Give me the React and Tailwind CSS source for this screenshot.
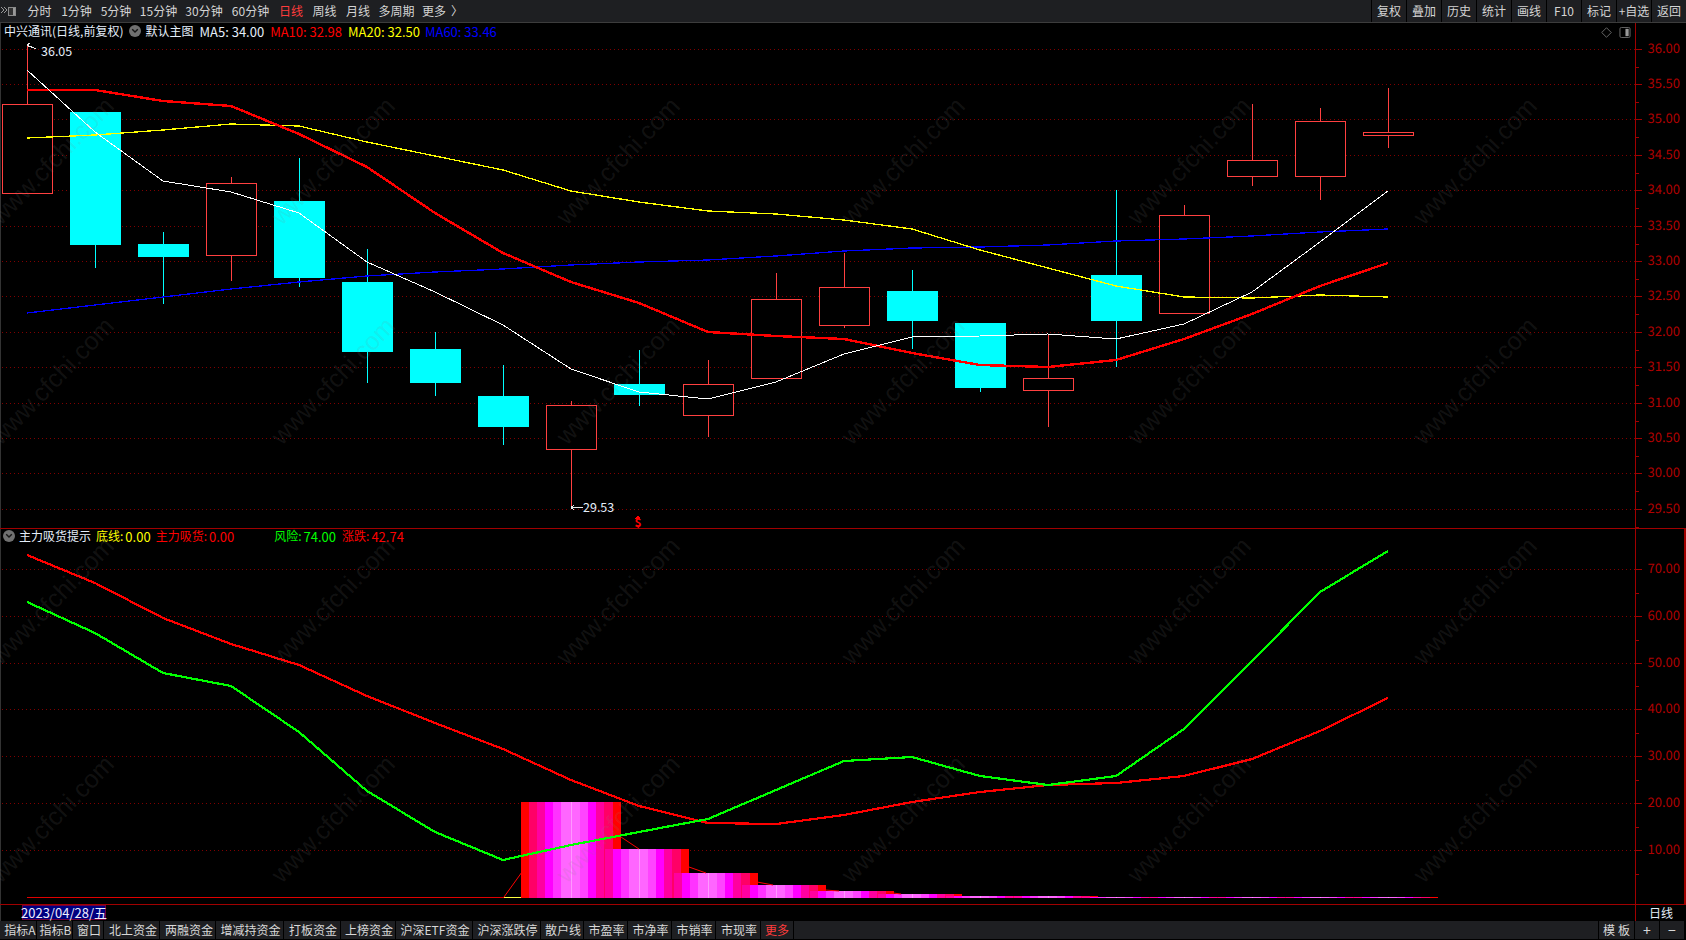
import React from "react";

const cx = (i) => Math.round(27 + 68.05 * i);
const Y = (v) => Math.round(30 + v / 3);
const LY = (v) => Math.round(530 + v / 3);

// [type, high, top, bottom, low] in zoom-image rows
const CANDLES = [
  ["r", 45, 223, 488, 488],
  ["c", 246, 246, 644, 714],
  ["c", 606, 642, 680, 822],
  ["r", 441, 460, 674, 752],
  ["c", 384, 513, 744, 771],
  ["c", 657, 756, 966, 1058],
  ["c", 906, 957, 1058, 1098],
  ["c", 1005, 1098, 1190, 1245],
  ["r", 1113, 1126, 1258, 1432],
  ["c", 960, 1062, 1094, 1128],
  ["r", 990, 1063, 1156, 1220],
  ["r", 729, 808, 1045, 1045],
  ["r", 669, 772, 886, 893],
  ["c", 720, 783, 873, 957],
  ["c", 879, 879, 1074, 1086],
  ["r", 914, 1045, 1079, 1190],
  ["c", 480, 735, 873, 1010],
  ["r", 526, 556, 850, 850],
  ["r", 222, 391, 439, 467],
  ["r", 234, 274, 439, 510],
  ["r", 174, 307, 314, 353],
];

const MA5 = [120, 305, 453, 487, 550, 697, 785, 885, 1018, 1086, 1108, 1056, 972, 921, 918, 913, 928, 882, 787, 635, 482];
const MA10 = [180, 180, 212, 228, 312, 410, 548, 670, 755, 820, 905, 918, 927, 970, 1004, 1011, 991, 927, 852, 768, 698];
const MA20 = [325, 316, 300, 281, 287, 337, 378, 420, 482, 515, 542, 551, 570, 597, 660, 713, 768, 800, 804, 796, 802];
const MA60 = [850, 826, 802, 778, 755, 738, 727, 716, 705, 697, 691, 679, 662, 653, 650, 644, 634, 627, 618, 607, 598];
const RISK = [217, 310, 428, 468, 606, 784, 905, 990, 945, 905, 866, 780, 692, 680, 737, 765, 737, 598, 393, 187, 62];
const CHG = [74, 158, 265, 342, 405, 498, 578, 656, 750, 827, 878, 882, 856, 817, 787, 765, 758, 737, 688, 604, 503];

const PRICE_ROWS = [
  [49, "36.00"], [84, "35.50"], [119, "35.00"], [155, "34.50"], [190, "34.00"], [226, "33.50"], [261, "33.00"],
  [296, "32.50"], [332, "32.00"], [367, "31.50"], [403, "31.00"], [438, "30.50"], [473, "30.00"], [509, "29.50"],
];
const LOWER_ROWS = [
  [569, "70.00"], [616, "60.00"], [663, "50.00"], [709, "40.00"], [756, "30.00"], [803, "20.00"], [850, "10.00"],
];

const STRIPES = [
  [-50, -42, "#ff0000"], [-42, -34, "#ff0066"], [-34, -26, "#ff00a0"], [-26, -18, "#ff00ff"], [-18, -10, "#ff33ff"],
  [-10, 9, "#ff66ff"], [9, 17, "#ff44ff"], [17, 25, "#ff00ff"], [25, 33, "#ff00a0"], [33, 42, "#ff0066"], [42, 50, "#ff0000"],
];
const BARS = [
  [8, 802], [9, 849], [10, 873], [11, 885], [12, 891], [13, 894], [14, 896], [15, 896], [16, 897], [17, 897], [18, 897], [19, 897], [20, 897],
];
const CONNECT = [
  [504, 897, 522, 872], [621, 837, 639, 849], [689, 867, 706, 873], [757, 882, 773, 885], [825, 890, 839, 891], [893, 893, 901, 894],
];

const pts = (arr, fy) => arr.map((v, i) => `${cx(i)},${fy(v)}`).join(" ");

function Grid({ rows }) {
  return rows.map(([y]) => (
    <line key={y} x1="2" x2="1635" y1={y + 0.5} y2={y + 0.5} stroke="#800000" strokeDasharray="1 3" />
  ));
}

function Axis({ rows, top, height, extra = "" }) {
  const ticks = [];
  rows.forEach(([y], i) => {
    ticks.push(<line key={y} x1="0" x2="6" y1={y + 0.5} y2={y + 0.5} stroke="#a00000" />);
    const next = rows[i + 1];
    const my = next ? Math.round((y + next[0]) / 2) : y + Math.round((y - rows[i - 1][0]) / 2);
    ticks.push(<line key={`m${y}`} x1="0" x2="3" y1={my + 0.5} y2={my + 0.5} stroke="#a00000" />);
  });
  return (
    <div className={`w-[51px] shrink-0 border-l border-[#a00000] ${extra}`}>
      <svg width="48" height={height} viewBox={`0 ${top} 48 ${height}`} className="block" shapeRendering="crispEdges">
        {ticks}
        {rows.map(([y, t]) => (
          <text key={t} x="44" y={y + 4} textAnchor="end" fontSize="13" fill="#b00000" textRendering="geometricPrecision">{t}</text>
        ))}
      </svg>
    </div>
  );
}

function MainChart() {
  return (
    <svg width="1635" height="505" viewBox="0 23 1635 505" className="block shrink-0">
      <g shapeRendering="crispEdges">
        <Grid rows={PRICE_ROWS} />
        {CANDLES.map(([t, h, a, b, l], i) => {
          const x = cx(i) + 0.5;
          const col = t === "r" ? "#ff4040" : "#00ffff";
          const top = Y(a), bot = Y(b);
          return (
            <g key={i}>
              <line x1={x} x2={x} y1={Y(h)} y2={top} stroke={col} />
              <line x1={x} x2={x} y1={bot} y2={Y(l)} stroke={col} />
              {t === "r" ? (
                <rect x={x - 25} y={top + 0.5} width="50" height={Math.max(bot - top, 2)} fill="#000" stroke={col} />
              ) : (
                <rect x={x - 25.5} y={top} width="51" height={bot - top} fill={col} />
              )}
            </g>
          );
        })}
        <polyline points={pts(MA60, Y)} fill="none" stroke="#0000ff" strokeWidth="1.3" />
        <polyline points={pts(MA20, Y)} fill="none" stroke="#ffff00" strokeWidth="1.3" />
        <polyline points={pts(MA10, Y)} fill="none" stroke="#ff0000" strokeWidth="2.4" />
        <polyline points={pts(MA5, Y)} fill="none" stroke="#ffffff" strokeWidth="1" />
        <line x1="27" x2="36" y1="45" y2="49" stroke="#e8e8e8" />
        <line x1="27" x2="30" y1="45" y2="43" stroke="#e8e8e8" />
        <line x1="27" x2="30" y1="45" y2="47" stroke="#e8e8e8" />
        <line x1="571" x2="583" y1="507.5" y2="507.5" stroke="#e8e8e8" />
        <line x1="571" x2="574" y1="507.5" y2="505" stroke="#e8e8e8" />
        <line x1="571" x2="574" y1="507.5" y2="510" stroke="#e8e8e8" />
        <polygon points="638,515.5 635.5,518.5 640.5,518.5" fill="#ff0000" />
      </g>
      <text x="41" y="56" fontSize="12.5" fill="#e4eefa">36.05</text>
      <text x="583" y="512" fontSize="12.5" fill="#e4eefa">29.53</text>
      <text x="638" y="526.5" fontSize="12" fontWeight="700" textAnchor="middle" fill="#ff0000">$</text>
    </svg>
  );
}

function LowerChart() {
  return (
    <svg width="1635" height="375" viewBox="0 529 1635 375" className="block shrink-0">
      <g shapeRendering="crispEdges">
        <Grid rows={LOWER_ROWS} />
        <rect x="27" y="897" width="477" height="1" fill="#e00000" />
        <rect x="504" y="897" width="18" height="1" fill="#ffff40" />
        <rect x="1430" y="897" width="8" height="1" fill="#d00030" />
        {BARS.map(([i, top], n) => {
          const c = cx(i);
          return (
            <g key={i}>
              {STRIPES.filter(([a]) => n === 0 || a >= -34).map(([a, b, col]) => (
                <rect key={a} x={c + a} y={top} width={b - a} height={898 - top} fill={col} />
              ))}
              <rect x={c} y={top} width="1" height={898 - top} fill="#ff99ff" />
            </g>
          );
        })}
      </g>
      {CONNECT.map(([a, b, c, d]) => (
        <line key={a} x1={a} y1={b} x2={c} y2={d} stroke="#ff0000" strokeWidth="1" />
      ))}
      <g shapeRendering="crispEdges">
        <polyline points={pts(CHG, LY)} fill="none" stroke="#ff0000" strokeWidth="2.2" />
        <polyline points={pts(RISK, LY)} fill="none" stroke="#00ff00" strokeWidth="2.2" />
      </g>
    </svg>
  );
}

function Marks() {
  const rows = [138, 358, 578, 796];
  const cols = [52, 333, 618, 903, 1189, 1475];
  return (
    <div className="absolute inset-0 overflow-hidden pointer-events-none">
      {rows.flatMap((r) =>
        cols.map((c) => (
          <span
            key={`${r}-${c}`}
            className="absolute -translate-x-1/2 -translate-y-1/2 -rotate-[46deg] whitespace-nowrap text-[25px] leading-none text-[rgba(128,128,128,0.14)] font-['Liberation_Sans',sans-serif]"
            style={{ left: c, top: r }}
          >
            www.cfchi.com
          </span>
        ))
      )}
    </div>
  );
}

function Chevron() {
  return (
    <span className="w-[12px] h-[12px] rounded-full bg-[#707070] flex items-center justify-center shrink-0">
      <svg width="8" height="6" viewBox="0 0 8 6"><path d="M1.2 1.2L4 4l2.8-2.8" fill="none" stroke="#151515" strokeWidth="1.4" /></svg>
    </span>
  );
}

const LEFT = [["分时", 35], ["1分钟", 39], ["5分钟", 40], ["15分钟", 45], ["30分钟", 46], ["60分钟", 47], ["日线", 34, 1], ["周线", 33], ["月线", 34], ["多周期", 43]];
const RIGHT = ["复权", "叠加", "历史", "统计", "画线", "F10", "标记", "+自选", "返回"];
const TABS = [["指标A", 35], ["指标B", 36], ["窗口", 31], ["北上资金", 56, 1], ["两融资金", 56, 1], ["增减持资金", 68], ["打板资金", 57], ["上榜资金", 55], ["沪深ETF资金", 77], ["沪深涨跌停", 68], ["散户线", 43], ["市盈率", 44], ["市净率", 44], ["市销率", 44], ["市现率", 45]];

function TopBar() {
  return (
    <div className="h-[23px] flex bg-[#1e1f22] border-b border-[#3c3c3c] text-[12px] text-[#d4d4d4]">
      <div className="w-[22px] flex items-center shrink-0">
        <svg width="18" height="14" viewBox="0 0 18 14">
          <path d="M1 3l3 3-3 3M4 3l3 3-3 3" fill="none" stroke="#9a9a9a" strokeWidth="1" />
          <rect x="8.5" y="3.5" width="7" height="8" fill="#333" stroke="#8a8a8a" />
          <rect x="13" y="4" width="2" height="7" fill="#999" />
        </svg>
      </div>
      {LEFT.map(([t, w, on]) => (
        <div key={t} className={`flex items-center justify-center shrink-0 ${on ? "text-[#ff3c3c]" : ""}`} style={{ width: w }}>{t}</div>
      ))}
      <div className="flex items-center pl-[4px]">更多<span className="ml-[5px]">〉</span></div>
      <div className="flex-1" />
      {RIGHT.map((t) => (
        <div key={t} className="w-[35px] border-l border-black flex items-center justify-center shrink-0 whitespace-nowrap">{t}</div>
      ))}
    </div>
  );
}

function BottomBar() {
  return (
    <div className="h-[18px] flex bg-[#1e1f22] text-[12px] text-[#d8d8d8] pl-[2px]">
      {TABS.map(([t, w, more]) => (
        <div key={t} className={`border-r border-black flex items-center justify-center shrink-0 whitespace-nowrap ${more ? "pl-[3px]" : "pl-[2px]"}`} style={{ width: w }}>{t}</div>
      ))}
      <div className="w-[33px] flex items-center justify-center text-[#ff3c3c] border-r border-black shrink-0">更多</div>
      <div className="flex-1" />
      <div className="w-[36px] border-l border-black flex items-center justify-center gap-[3px]"><span>模</span><span>板</span></div>
      <div className="w-[25px] border-l border-black flex items-center justify-center text-[14px]">+</div>
      <div className="w-[25px] border-l border-black flex items-center justify-center text-[14px]">−</div>
      <div className="w-[2px] bg-black" />
    </div>
  );
}

function Val({ label, value, color, className = "" }) {
  return (
    <span className={`flex items-center gap-[2px] ${color} ${className}`}>
      <span className="text-[12px]">{label}</span>
      <span className="text-[13px]">{value}</span>
    </span>
  );
}

export default function App() {
  return (
    <div className="w-[1686px] h-[940px] bg-black overflow-hidden flex flex-col font-['Noto_Sans_CJK_SC',sans-serif] text-[12px] leading-none">
      <TopBar />
      <div className="relative flex-1 flex flex-col">
        <div className="absolute left-0 top-0 bottom-0 w-px bg-[#333]" />
        <div className="relative flex h-[506px] border-b border-[#a00000]">
          <MainChart />
          <Axis rows={PRICE_ROWS} top={23} height={505} />
          <div className="absolute left-[4px] top-px h-[14px] flex items-center whitespace-nowrap">
            <span className="text-[#e4eefa]">中兴通讯(日线,前复权)</span>
            <span className="ml-[6px]"><Chevron /></span>
            <span className="ml-[4px] text-[#e4eefa]">默认主图</span>
            <span className="ml-[6px] text-[13px] text-[#e4eefa]">MA5: 34.00</span>
            <span className="ml-[6px] text-[13px] text-[#ff0000]">MA10: 32.98</span>
            <span className="ml-[6px] text-[13px] text-[#ffff00]">MA20: 32.50</span>
            <span className="ml-[5px] text-[13px] text-[#0000ff]">MA60: 33.46</span>
          </div>
          <div className="absolute left-[1601px] top-[4px] flex items-center gap-[7px]">
            <svg width="11" height="11" viewBox="0 0 12 12"><path d="M6 .8L11.2 6 6 11.2.8 6z" fill="none" stroke="#6e6e6e" /></svg>
            <svg width="12" height="11" viewBox="0 0 12 12"><rect x=".5" y=".5" width="11" height="11" rx="1.5" fill="none" stroke="#6e6e6e" /><rect x="6.5" y="2" width="3.5" height="8" fill="#9a9a9a" /></svg>
          </div>
        </div>
        <div className="relative flex h-[376px] border-b border-[#a00000]">
          <LowerChart />
          <Axis rows={LOWER_ROWS} top={529} height={375} extra="border-r-2 border-r-[#a00000]" />
          <div className="absolute left-[3px] top-0 h-[14px] flex items-center whitespace-nowrap">
            <Chevron />
            <span className="ml-[4px] text-[#e4eefa]">主力吸货提示</span>
            <Val label="底线:" value="0.00" color="text-[#ffff00]" className="ml-[5px]" />
            <Val label="主力吸货:" value="0.00" color="text-[#ff0000]" className="ml-[5px]" />
            <Val label="风险:" value="74.00" color="text-[#00ff00]" className="ml-[40px]" />
            <Val label="涨跌:" value="42.74" color="text-[#ff0000]" className="ml-[6px]" />
          </div>
        </div>
        <div className="h-[16px] flex">
          <div className="ml-[22px] w-[84px] h-[15px] bg-[#000080] border border-[#700040] text-[13px] text-[#eef] flex items-center justify-center whitespace-nowrap">2023/04/28/五</div>
          <div className="flex-1" />
          <div className="w-[51px] border-l border-[#a00000] flex items-center justify-center text-[12px] text-[#e4eefa]">日线</div>
        </div>
        <Marks />
      </div>
      <BottomBar />
      <div className="h-px bg-black" />
    </div>
  );
}
